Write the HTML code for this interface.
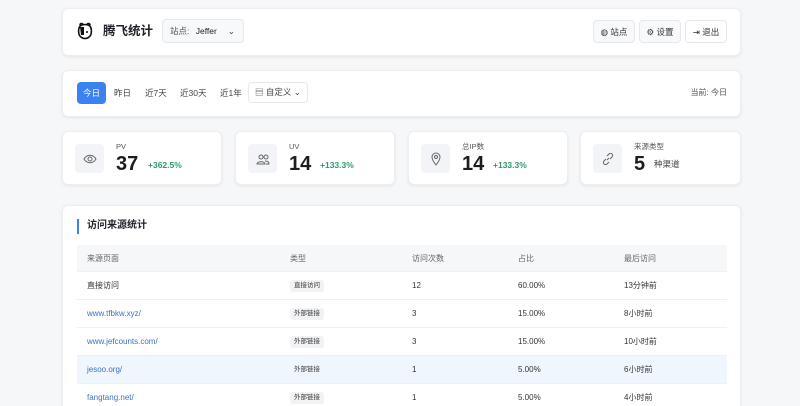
<!DOCTYPE html>
<html><head><meta charset="utf-8"><style>
*{box-sizing:border-box;margin:0;padding:0}
html,body{width:800px;height:406px;overflow:hidden}
body{background:#f6f7f9;font-family:"Liberation Sans","Noto Sans CJK SC",sans-serif;color:#1f2329;position:relative}
.card{position:absolute;background:#fff;border-radius:6px;box-shadow:0 1px 3px rgba(0,0,0,.08);border:1px solid #eceef1}
.abs{position:absolute}
.btn{position:absolute;top:11px;height:23px;width:42px;border:1px solid #e6e8eb;border-radius:4px;background:#f8f9fa;font-size:8.5px;display:flex;align-items:center;justify-content:center;gap:3px;color:#333}
.tab{position:absolute;top:11px;height:22px;font-size:8.5px;line-height:22px;color:#444}
.ic{position:absolute;left:12px;top:12px;width:29px;height:29px;background:#f2f4f7;border-radius:4px;display:flex;align-items:center;justify-content:center}
.lab{position:absolute;left:53px;top:10px;font-size:7.5px;color:#555;line-height:9px}
.num{position:absolute;left:53px;top:21px;font-size:20px;font-weight:bold;color:#1a1d21}
.pct{position:absolute;top:28px;font-size:8.5px;color:#2e9a6a;font-weight:bold}
.row{position:absolute;left:14px;width:650px;height:28px;border-bottom:1px solid #eef0f2;font-size:8px;color:#333}
.row span{position:absolute;top:9px;line-height:10px}
.row .tag{top:8px;background:#f1f2f4;border-radius:3px;padding:1px 4px;font-size:6.5px;line-height:10px}
a{color:#3b73c4;text-decoration:none}
</style></head><body>
<div class="card" style="left:62px;top:8px;width:679px;height:48px">
 <svg class="abs" style="left:14px;top:13px" width="16" height="18" viewBox="0 0 16 18"><path d="M3 3c0-2 3-2 3 0M10 3c0-2 3-2 3 0M3 4c-2 3-2 9 1 11 2 2 6 2 8 0 3-2 3-8 1-11-3-2-7-2-10 0z" fill="none" stroke="#111" stroke-width="1.6"/><path d="M3 5h4v8H4z" fill="#111"/><circle cx="10" cy="10" r="1" fill="#111"/></svg>
 <div class="abs" style="left:40px;top:14px;font-size:12.5px;font-weight:bold;line-height:16px">腾飞统计</div>
 <div class="abs" style="left:99px;top:10px;width:82px;height:24px;border:1px solid #e6e8eb;border-radius:4px;background:#f8f9fa;font-size:8.5px;line-height:22px;padding-left:7px;color:#555">站点: <b style="color:#222;font-weight:normal;margin-left:4px">Jeffer</b><span style="position:absolute;right:8px;top:0;color:#444">⌄</span></div>
 <div class="btn" style="left:530px">◍ 站点</div>
 <div class="btn" style="left:576px">⚙ 设置</div>
 <div class="btn" style="left:622px;background:#fff">⇥ 退出</div>
</div>
<div class="card" style="left:62px;top:70px;width:679px;height:47px">
 <div class="tab" style="left:14px;width:29px;background:#3b82f0;color:#fff;border-radius:4px;text-align:center">今日</div>
 <div class="tab" style="left:51px">昨日</div>
 <div class="tab" style="left:82px">近7天</div>
 <div class="tab" style="left:117px">近30天</div>
 <div class="tab" style="left:157px">近1年</div>
 <div class="tab" style="left:185px;border:1px solid #e6e8eb;border-radius:4px;padding:0 6px;height:21px;line-height:19px;top:11px">▤ 自定义 ⌄</div>
 <div class="abs" style="right:13px;top:17px;font-size:8px;color:#555;line-height:10px">当前: 今日</div>
</div>
<div class="card" style="left:62px;top:131px;width:160px;height:54px"><div class="ic"><svg width="14" height="10" viewBox="0 0 14 10"><path d="M1 5c3-5 9-5 12 0-3 5-9 5-12 0z" fill="none" stroke="#666"/><circle cx="7" cy="5" r="2" fill="none" stroke="#666"/></svg></div><div class="lab">PV</div><div class="num">37</div><div class="pct" style="left:85px">+362.5%</div></div>
<div class="card" style="left:235px;top:131px;width:160px;height:54px"><div class="ic"><svg width="14" height="12" viewBox="0 0 14 12"><circle cx="5" cy="4" r="2" fill="none" stroke="#666"/><circle cx="10" cy="4" r="2" fill="none" stroke="#666"/><path d="M1 11c0-3 8-3 8 0zM9 8c3 0 4 1 4 3h-3" fill="none" stroke="#666"/></svg></div><div class="lab">UV</div><div class="num">14</div><div class="pct" style="left:84px">+133.3%</div></div>
<div class="card" style="left:408px;top:131px;width:160px;height:54px"><div class="ic"><svg width="10" height="14" viewBox="0 0 10 14"><path d="M5 13C1 8 1 6 1 5a4 4 0 018 0c0 1 0 3-4 8z" fill="none" stroke="#666"/><circle cx="5" cy="5" r="1.5" fill="none" stroke="#666"/></svg></div><div class="lab">总IP数</div><div class="num">14</div><div class="pct" style="left:84px">+133.3%</div></div>
<div class="card" style="left:580px;top:131px;width:161px;height:54px"><div class="ic"><svg width="12" height="12" viewBox="0 0 12 12"><path d="M5 7l2-2M4 6L2 8a2 2 0 003 3l2-2M8 6l2-2a2 2 0 00-3-3L5 3" fill="none" stroke="#666"/></svg></div><div class="lab">来源类型</div><div class="num">5</div><div class="abs" style="left:73px;top:27px;font-size:8.5px;color:#444;line-height:11px">种渠道</div></div>
<div class="card" style="left:62px;top:205px;width:679px;height:220px">
 <div class="abs" style="left:14px;top:13px;width:2px;height:15px;background:#3b82f0"></div>
 <div class="abs" style="left:24px;top:14px;font-size:10px;font-weight:bold;line-height:12px">访问来源统计</div>
 <div class="row" style="top:39px;background:#f6f7f9;height:27px;color:#666"><span style="left:10px">来源页面</span><span style="left:213px">类型</span><span style="left:335px">访问次数</span><span style="left:441px">占比</span><span style="left:547px">最后访问</span></div>
 <div class="row" style="top:66px"><span style="left:10px">直接访问</span><span class="tag" style="left:213px">直接访问</span><span style="left:335px">12</span><span style="left:441px">60.00%</span><span style="left:547px">13分钟前</span></div>
 <div class="row" style="top:94px"><span style="left:10px"><a>www.tfbkw.xyz/</a></span><span class="tag" style="left:213px">外部链接</span><span style="left:335px">3</span><span style="left:441px">15.00%</span><span style="left:547px">8小时前</span></div>
 <div class="row" style="top:122px"><span style="left:10px"><a>www.jefcounts.com/</a></span><span class="tag" style="left:213px">外部链接</span><span style="left:335px">3</span><span style="left:441px">15.00%</span><span style="left:547px">10小时前</span></div>
 <div class="row" style="top:150px;background:#f0f6fd"><span style="left:10px"><a>jesoo.org/</a></span><span class="tag" style="left:213px;background:transparent">外部链接</span><span style="left:335px">1</span><span style="left:441px">5.00%</span><span style="left:547px">6小时前</span></div>
 <div class="row" style="top:178px"><span style="left:10px"><a>fangtang.net/</a></span><span class="tag" style="left:213px">外部链接</span><span style="left:335px">1</span><span style="left:441px">5.00%</span><span style="left:547px">4小时前</span></div>
</div>
</body></html>
